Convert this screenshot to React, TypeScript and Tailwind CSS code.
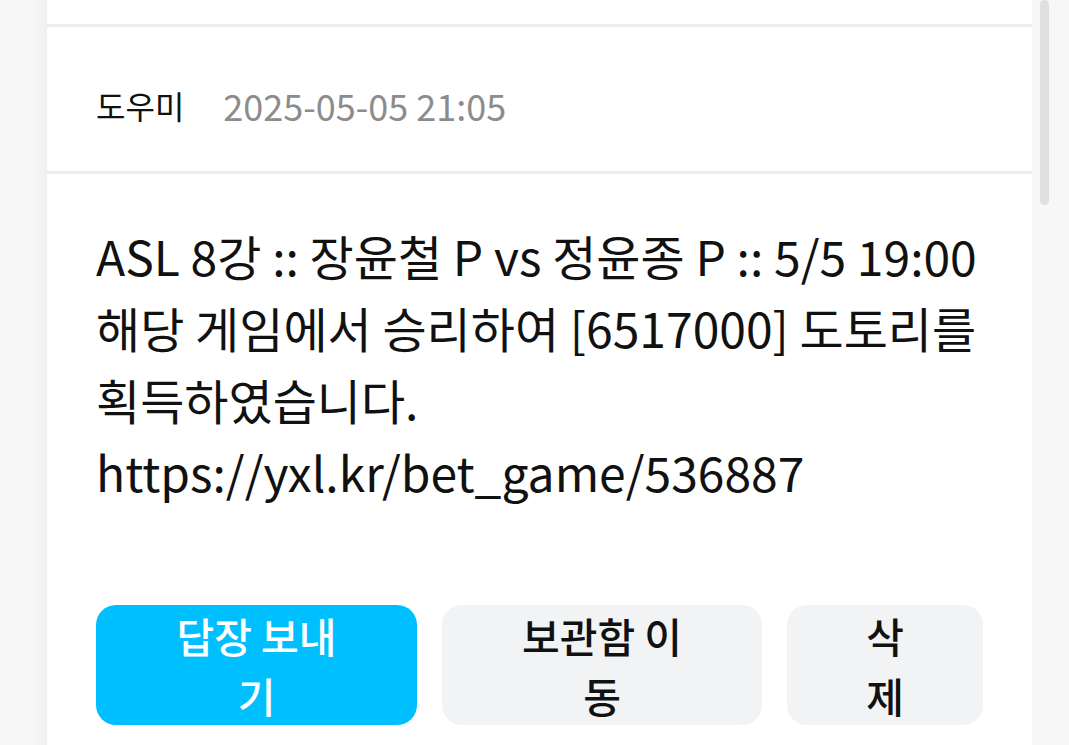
export default function App() {
  const font = { fontFamily: '"Noto Sans CJK KR", "Noto Sans", sans-serif' }
  return (
    <div className="h-[745px] w-[1069px] overflow-hidden bg-[#f7f7f7] flex" style={font}>
      <div className="w-[47px] shrink-0 bg-gradient-to-r from-[#f7f7f7] from-70% to-[#f0f0f0]" />
      <div className="w-[985px] shrink-0 flex flex-col">
        <div className="h-[24px] bg-white" />
        <div className="h-[3px] bg-[#ededee]" />
        <div className="h-[144px] bg-white flex items-center px-[49px] pt-[12px]">
          <span className="text-[32px] text-[#111]">도우미</span>
          <span className="ml-[39px] text-[36px] text-[#8c8c8c]">2025-05-05 21:05</span>
        </div>
        <div className="h-[3px] bg-[#ededee]" />
        <div className="flex-1 bg-white px-[49px] pt-[45px]">
          <p className="text-[48px] leading-[72px] text-[#111]">
            ASL 8강 :: 장윤철 P vs 정윤종 P :: 5/5 19:00<br />
            해당 게임에서 승리하여 [6517000] 도토리를<br />
            획득하였습니다.<br />
            https://yxl.kr/bet_game/536887
          </p>
          <div className="mt-[98px] flex gap-[25px]">
            <button className="w-[321px] h-[120px] rounded-[20px] bg-[#00bfff] text-white text-[41px] font-medium leading-[60px] px-[68px]">
              답장 보내기
            </button>
            <button className="w-[320px] h-[120px] rounded-[20px] bg-[#f2f3f5] text-[#111] text-[41px] font-medium leading-[60px] px-[68px]">
              보관함 이동
            </button>
            <button className="w-[196px] h-[120px] rounded-[20px] bg-[#f2f3f5] text-[#111] text-[41px] font-medium leading-[60px] px-[68px]">
              삭제
            </button>
          </div>
        </div>
      </div>
      <div className="flex-1 bg-[#f7f7f7] pl-[8px]">
        <div className="w-[9px] h-[205px] rounded-full bg-[#e0e0e0]" />
      </div>
    </div>
  )
}
